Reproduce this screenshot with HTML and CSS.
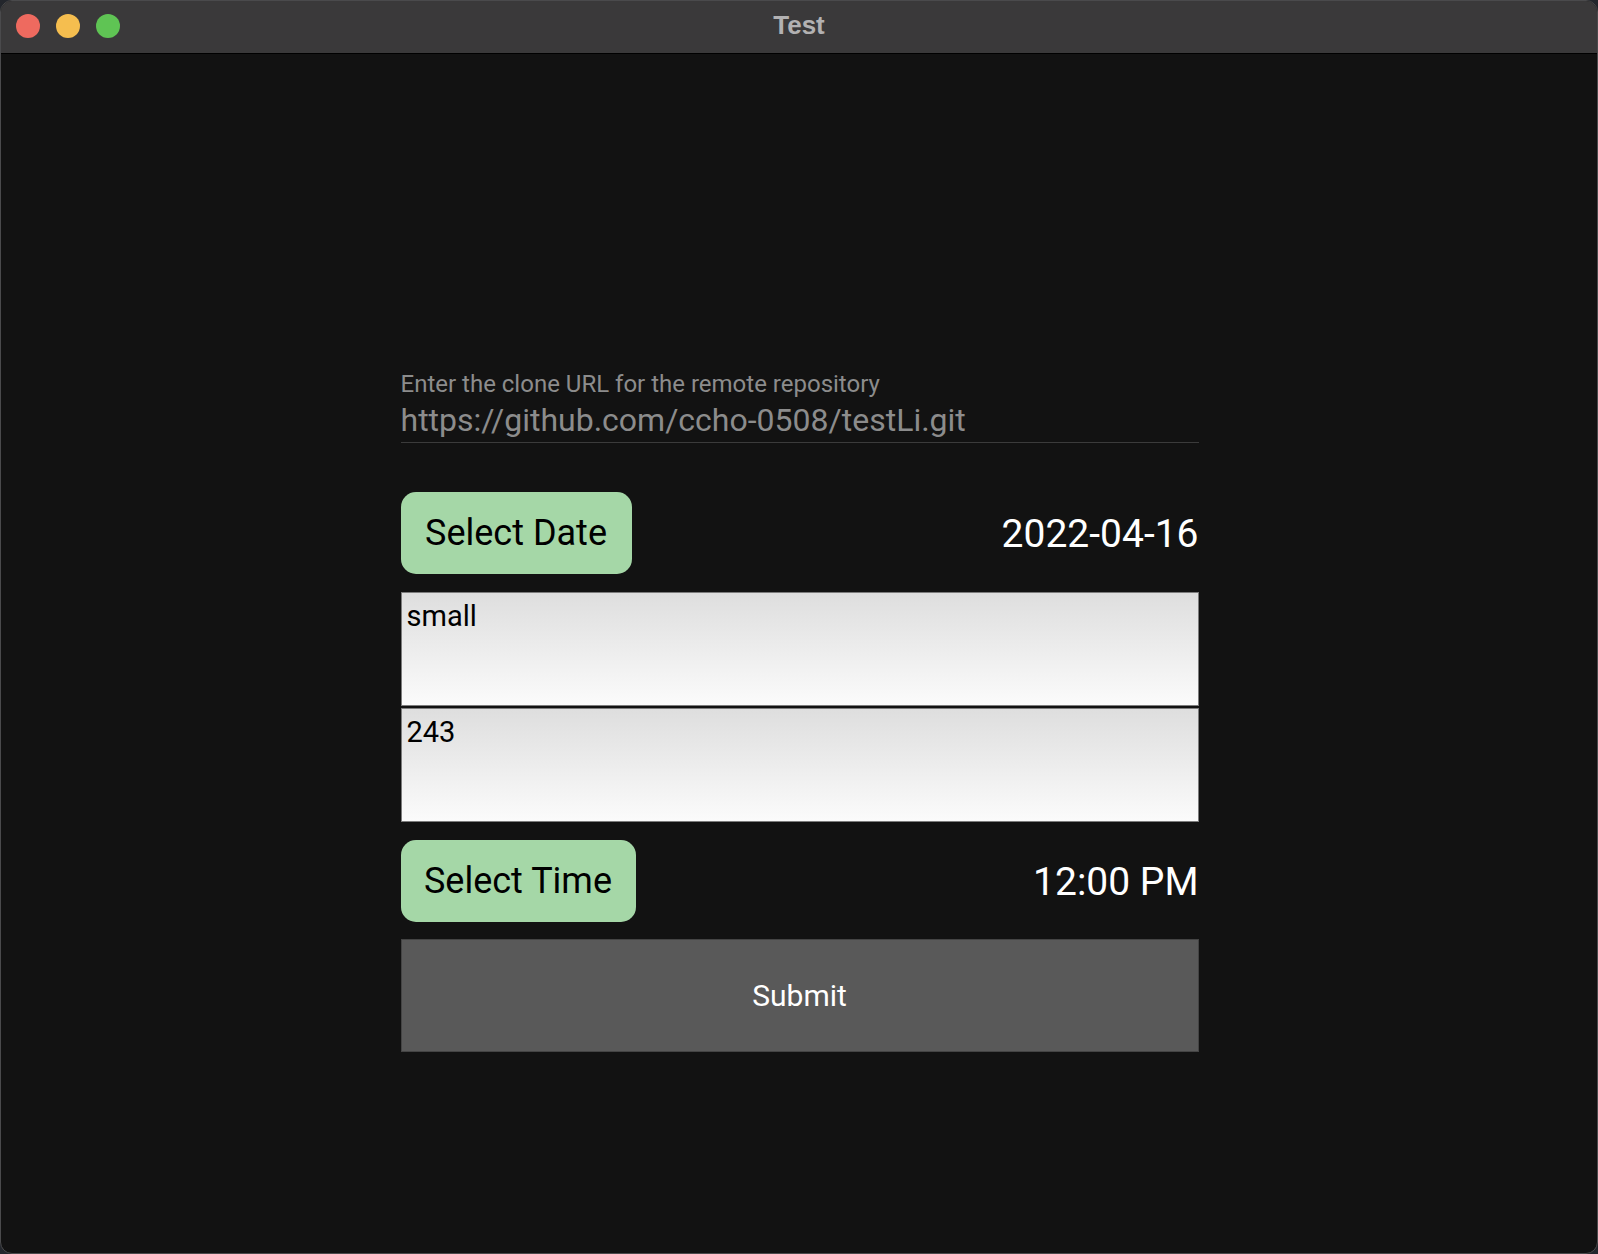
FILE: index.html
```html
<!DOCTYPE html>
<html>
<head>
<meta charset="utf-8">
<link rel="stylesheet" href="styles.css">
</head>
<body>
<div class="window">
  <div class="titlebar">
    <div class="lights">
      <span class="light red"></span>
      <span class="light yellow"></span>
      <span class="light green"></span>
    </div>
    <div class="title">Test</div>
  </div>
  <div class="content">
    <div class="form">
      <div class="field">
        <div class="field-label">Enter the clone URL for the remote repository</div>
        <div class="field-value">https://github.com/ccho-0508/testLi.git</div>
      </div>
      <div class="row row-date">
        <button class="pick">Select Date</button>
        <div class="value">2022-04-16</div>
      </div>
      <div class="box">small</div>
      <div class="box box2">243</div>
      <div class="row row-time">
        <button class="pick pick-time">Select Time</button>
        <div class="value">12:00 PM</div>
      </div>
      <button class="submit">Submit</button>
    </div>
  </div>
</div>
</body>
</html>
```
FILE: styles.css
```css
html, body {
  margin: 0;
  padding: 0;
  background: #23262c;
  width: 1598px;
  height: 1254px;
  overflow: hidden;
}
.window {
  box-sizing: border-box;
  width: 1598px;
  height: 1254px;
  background: #121212;
  border: 1px solid #4a4a4c;
  border-radius: 12px;
  overflow: hidden;
  display: flex;
  flex-direction: column;
  font-family: Roboto, "Noto Sans", sans-serif;
}
.titlebar {
  position: relative;
  height: 52px;
  background: #3a393a;
  border-bottom: 1px solid #000;
  display: flex;
  align-items: center;
  justify-content: center;
  flex-shrink: 0;
}
.lights {
  position: absolute;
  left: 15px;
  top: 13px;
  display: flex;
  gap: 16px;
}
.light {
  width: 24px;
  height: 24px;
  border-radius: 50%;
  display: block;
}
.red { background: #ee6a5f; }
.yellow { background: #f5be4f; }
.green { background: #5fc454; }
.title {
  font-family: "Liberation Sans", Arial, sans-serif;
  font-weight: bold;
  font-size: 26px;
  color: #b2b1b2;
  margin-top: -3px;
}
.content {
  flex: 1;
  display: flex;
  justify-content: center;
}
.form {
  width: 798px;
  margin-top: 316px;
  margin-left: 1px;
  display: flex;
  flex-direction: column;
}
.field {
  border-bottom: 1px solid #3b3b3b;
}
.field-label {
  font-size: 24px;
  line-height: 28px;
  color: #8c8c8c;
}
.field-value {
  font-size: 32px;
  line-height: 44px;
  color: #8c8c8c;
}
.row {
  display: flex;
  justify-content: space-between;
  align-items: center;
}
.row-date {
  margin-top: 49px;
  height: 82px;
}
.row-time {
  margin-top: 18px;
  height: 82px;
}
.pick {
  height: 82px;
  width: 231px;
  background: #a5d7a7;
  border: none;
  border-radius: 15px;
  font-family: Roboto, sans-serif;
  font-size: 36px;
  color: #000;
  padding: 0;
  margin: 0;
}
.pick-time {
  width: 235px;
}
.value {
  font-size: 39px;
  color: #fff;
  padding-top: 2px;
}
.box {
  box-sizing: border-box;
  margin-top: 18px;
  height: 114px;
  border: 1px solid #7c7c7c;
  background: linear-gradient(#dedede, #fbfbfb);
  font-size: 29px;
  color: #000;
  padding: 5px 5px;
  line-height: 36px;
}
.box2 {
  margin-top: 2px;
}
.submit {
  box-sizing: border-box;
  margin-top: 17px;
  height: 113px;
  background: #595959;
  border: 1px solid #444;
  font-family: Roboto, sans-serif;
  font-size: 30px;
  color: #fff;
}
```
